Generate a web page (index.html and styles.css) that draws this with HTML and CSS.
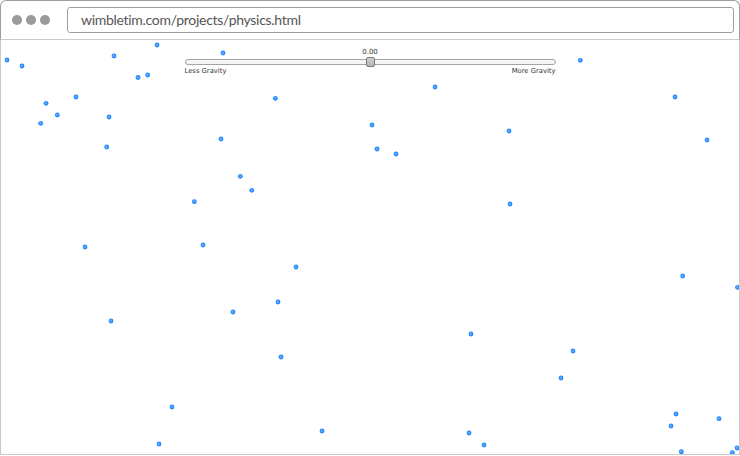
FILE: index.html
```html
<!DOCTYPE html>
<html>
<head>
<meta charset="utf-8">
<title>physics</title>
<link rel="stylesheet" href="styles.css">
</head>
<body>
<div class="window">
  <div class="chrome">
    <div class="lights"><span class="light"></span><span class="light"></span><span class="light"></span></div>
    <div class="address">wimbletim.com/projects/physics.html</div>
  </div>
  <div class="content">
    <svg class="field" width="738" height="414" viewBox="1 40 738 414">
      <defs>
        <radialGradient id="ball" cx="45%" cy="45%" r="55%">
          <stop offset="0" stop-color="#72b8ff"/>
          <stop offset="0.6" stop-color="#2f90ff"/>
          <stop offset="1" stop-color="#1a7cf0"/>
        </radialGradient>
      </defs>
      <g fill="url(#ball)">
        <circle cx="7" cy="60" r="2.4"/>
        <circle cx="22" cy="66" r="2.4"/>
        <circle cx="114" cy="56" r="2.4"/>
        <circle cx="157" cy="45" r="2.4"/>
        <circle cx="223" cy="53" r="2.4"/>
        <circle cx="138" cy="77.5" r="2.4"/>
        <circle cx="147.7" cy="75" r="2.4"/>
        <circle cx="580.3" cy="60.3" r="2.4"/>
        <circle cx="46" cy="103.3" r="2.4"/>
        <circle cx="76" cy="97" r="2.4"/>
        <circle cx="57.3" cy="115" r="2.4"/>
        <circle cx="40.7" cy="123.3" r="2.4"/>
        <circle cx="109" cy="117" r="2.4"/>
        <circle cx="106.7" cy="147" r="2.4"/>
        <circle cx="275.3" cy="98.3" r="2.4"/>
        <circle cx="221" cy="139" r="2.4"/>
        <circle cx="240.3" cy="176.3" r="2.4"/>
        <circle cx="251.7" cy="190.3" r="2.4"/>
        <circle cx="194.3" cy="201.7" r="2.4"/>
        <circle cx="435" cy="87" r="2.4"/>
        <circle cx="372" cy="125" r="2.4"/>
        <circle cx="377" cy="149" r="2.4"/>
        <circle cx="396" cy="154" r="2.4"/>
        <circle cx="509" cy="131" r="2.4"/>
        <circle cx="675" cy="97" r="2.4"/>
        <circle cx="707" cy="140" r="2.4"/>
        <circle cx="510" cy="204" r="2.4"/>
        <circle cx="85" cy="247" r="2.4"/>
        <circle cx="203" cy="245" r="2.4"/>
        <circle cx="296" cy="267" r="2.4"/>
        <circle cx="682.7" cy="276" r="2.4"/>
        <circle cx="737.5" cy="287.3" r="2.4"/>
        <circle cx="278" cy="302" r="2.4"/>
        <circle cx="233" cy="312" r="2.4"/>
        <circle cx="111" cy="321" r="2.4"/>
        <circle cx="471" cy="334" r="2.4"/>
        <circle cx="573" cy="351" r="2.4"/>
        <circle cx="281" cy="357" r="2.4"/>
        <circle cx="561" cy="378" r="2.4"/>
        <circle cx="172" cy="407" r="2.4"/>
        <circle cx="676" cy="414" r="2.4"/>
        <circle cx="719" cy="418.7" r="2.4"/>
        <circle cx="671" cy="426" r="2.4"/>
        <circle cx="322" cy="431" r="2.4"/>
        <circle cx="469" cy="433" r="2.4"/>
        <circle cx="159" cy="444" r="2.4"/>
        <circle cx="484" cy="445" r="2.4"/>
        <circle cx="681.3" cy="451.7" r="2.4"/>
        <circle cx="737" cy="448" r="2.4"/>
        <circle cx="732.3" cy="452.7" r="2.4"/>
      </g>
    </svg>
    <div class="gauge">
      <div class="value">0.00</div>
      <div class="track"><span class="thumb"></span></div>
      <div class="ends"><span>Less Gravity</span><span>More Gravity</span></div>
    </div>
  </div>
</div>
</body>
</html>
```

FILE: styles.css
```css
html, body {
  margin: 0;
  padding: 0;
  background: #ffffff;
}

.window {
  width: 740px;
  height: 455px;
  display: flex;
  flex-direction: column;
}

.chrome {
  box-sizing: border-box;
  height: 40px;
  display: flex;
  align-items: center;
  padding: 0 5px 0 11px;
  border: 1px solid #9e9e9e;
  border-bottom-color: #cbcbcb;
  border-radius: 6px 6px 0 0;
  background: #ffffff;
}

.lights {
  display: flex;
  gap: 4px;
  margin-right: 17px;
}

.light {
  width: 10px;
  height: 10px;
  border-radius: 50%;
  background: #9a9a9a;
}

.address {
  box-sizing: border-box;
  flex: 1;
  height: 26px;
  border: 1px solid #9e9e9e;
  border-radius: 3px;
  padding-left: 13px;
  font-family: Lato, "Open Sans", sans-serif;
  font-size: 14px;
  letter-spacing: -0.3px;
  line-height: 24px;
  color: #555555;
}

.content {
  position: relative;
  flex: 1;
  border: 1px solid #c9c9c9;
  border-top: none;
  overflow: hidden;
}

.field {
  position: absolute;
  left: 0;
  top: 0;
  display: block;
}

.gauge {
  position: relative;
  width: 371px;
  margin: 0 auto;
  font-family: "DejaVu Sans", Verdana, sans-serif;
  color: #333333;
}

.value {
  margin-top: 7px;
  text-align: center;
  font-size: 7px;
  line-height: 10px;
}

.track {
  position: relative;
  box-sizing: border-box;
  height: 6px;
  margin-top: 2px;
  border: 1px solid #a3a3a3;
  border-radius: 3px;
  background: #f5f5f5;
}

.thumb {
  position: absolute;
  left: 50%;
  top: -3px;
  box-sizing: border-box;
  width: 9px;
  height: 10px;
  margin-left: -4.5px;
  border: 1px solid #7a7a7a;
  border-radius: 2px;
  background: linear-gradient(#cfcfcf, #b4b4b4);
}

.ends {
  display: flex;
  justify-content: space-between;
  margin-top: 1px;
  font-size: 6.8px;
  line-height: 10px;
}
```
